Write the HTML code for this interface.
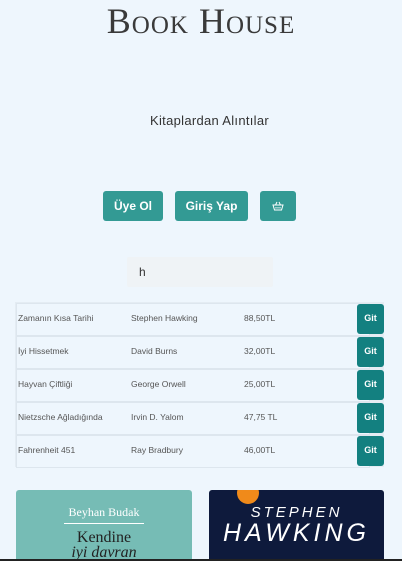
<!DOCTYPE html><html style="overflow:hidden;height:561px"><head><style>
body{margin:0;width:402px;height:561px;background:#eef6fd;font-family:"Liberation Sans",sans-serif;position:relative;overflow:hidden}
.a{position:absolute}
.t{left:0;width:402px;text-align:center;top:0px;font-family:"Liberation Serif",serif;font-size:36px;font-variant:small-caps;color:#3a3a3a;letter-spacing:1px}
.b{background:#339a94;color:#fff;font-weight:bold;font-size:12px;border-radius:3px;text-align:center;line-height:30px;top:191px;height:30px}
.row{left:16px;width:352px;height:31px;background:#eef6fd;border:1px solid #dde6ee;font-size:8.5px;color:#555}
.row span{position:absolute;top:9px}
.g{position:absolute;left:340px;top:0;width:27px;height:30px;background:#138080;border-radius:3px;color:#fff;font-weight:bold;font-size:9px;text-align:center;line-height:29px}
</style></head><body>
<div class="a t">Book House</div>
<div class="a" style="left:150px;top:113px;font-size:13px;color:#333;letter-spacing:.3px">Kitaplardan Alıntılar</div>
<div class="a b" style="left:103px;width:60px">Üye Ol</div>
<div class="a b" style="left:175px;width:73px">Giriş Yap</div>
<div class="a b" style="left:260px;width:36px"><svg width="12" height="10" viewBox="0 0 12 10" style="vertical-align:-1px"><path d="M1 4h10l-1.5 5h-7z M3.5 4 5 1 M8.5 4 7 1 M4 6v1.5 M6 6v1.5 M8 6v1.5" fill="none" stroke="#fff" stroke-width="1"/></svg></div>
<div class="a" style="left:127px;top:257px;width:146px;height:30px;background:#eff3f6;border-radius:2px;font-size:12px;color:#333;line-height:30px;text-indent:12px">h</div>
<div class="a" style="left:15px;top:302px;width:369px;height:165px;background:#e4ecf3"></div>
<div class="a row" style="top:303px"><span style="left:1px">Zamanın Kısa Tarihi</span><span style="left:114px">Stephen Hawking</span><span style="left:227px">88,50TL</span><div class="g">Git</div></div>
<div class="a row" style="top:336px"><span style="left:1px">İyi Hissetmek</span><span style="left:114px">David Burns</span><span style="left:227px">32,00TL</span><div class="g">Git</div></div>
<div class="a row" style="top:369px"><span style="left:1px">Hayvan Çiftliği</span><span style="left:114px">George Orwell</span><span style="left:227px">25,00TL</span><div class="g">Git</div></div>
<div class="a row" style="top:402px"><span style="left:1px">Nietzsche Ağladığında</span><span style="left:114px">Irvin D. Yalom</span><span style="left:227px">47,75 TL</span><div class="g">Git</div></div>
<div class="a row" style="top:435px"><span style="left:1px">Fahrenheit 451</span><span style="left:114px">Ray Bradbury</span><span style="left:227px">46,00TL</span><div class="g">Git</div></div>
<div class="a" style="left:16px;top:490px;width:176px;height:69px;background:#76bcb5;border-radius:3px 3px 0 0;text-align:center;font-family:'Liberation Serif',serif;overflow:hidden">
<div style="margin-top:15px;color:#fff;font-size:12px">Beyhan Budak</div>
<div style="width:80px;height:1px;background:#fff;margin:3px auto"></div>
<div style="color:#222;font-size:16px;margin-top:5px">Kendine</div>
<div style="color:#222;font-size:16px;font-style:italic;margin-top:-3px">iyi davran</div></div>
<div class="a" style="left:209px;top:490px;width:175px;height:69px;background:#0e1a3c;border-radius:3px 3px 0 0;text-align:center;color:#fff;overflow:hidden">
<div style="position:absolute;left:28px;top:-8px;width:22px;height:22px;border-radius:50%;background:#f08a1a"></div>
<div style="margin-top:14px;font-size:15px;letter-spacing:3px;font-style:italic">STEPHEN</div>
<div style="font-size:25px;letter-spacing:4px;font-style:italic;margin-top:-2px">HAWKING</div></div>
<div class="a" style="left:0;top:559px;width:402px;height:2px;background:#222"></div>
</body></html>
